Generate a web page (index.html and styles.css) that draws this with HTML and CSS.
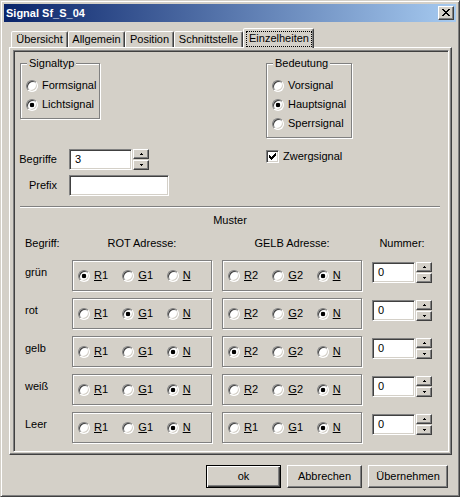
FILE: index.html
```html
<!DOCTYPE html>
<html>
<head>
<meta charset="utf-8">
<link rel="stylesheet" href="styles.css">
</head>
<body>
<div class="window">
  <div class="titlebar">
    <span class="title">Signal Sf_S_04</span>
    <div class="closebtn">
      <svg width="8" height="7" viewBox="0 0 8 7" shape-rendering="crispEdges"><path fill="#000" d="M0 0h2v1H0z M6 0h2v1H6z M1 1h2v1H1z M5 1h2v1H5z M2 2h4v1H2z M3 3h2v1H3z M2 4h4v1H2z M1 5h2v1H1z M5 5h2v1H5z M0 6h2v1H0z M6 6h2v1H6z"/></svg>
    </div>
  </div>
  <div class="client">
    <div class="tabs">
      <div class="tab t1">Übersicht</div>
      <div class="tab t2">Allgemein</div>
      <div class="tab t3">Position</div>
      <div class="tab t4">Schnittstelle</div>
      <div class="tab active"><div class="focus">Einzelheiten</div></div>
    </div>
    <div class="panel">
      <div class="page">
        <div class="top">
          <div class="col-left">
            <div class="group g-typ">
              <div class="legend">Signaltyp</div>
              <div class="opt"><span class="radio"></span>Formsignal</div>
              <div class="opt"><span class="radio on"></span>Lichtsignal</div>
            </div>
            <div class="form">
              <div class="lbl">Begriffe</div>
              <div class="field">
                <div class="edit e-begr">3</div>
                <div class="spin">
                  <div class="sbtn"><svg width="3" height="2" viewBox="0 0 3 2" shape-rendering="crispEdges"><path d="M1 0h1v1H1z M0 1h3v1H0z"/></svg></div>
                  <div class="sbtn"><svg width="3" height="2" viewBox="0 0 3 2" shape-rendering="crispEdges"><path d="M0 0h3v1H0z M1 1h1v1H1z"/></svg></div>
                </div>
              </div>
              <div class="lbl">Prefix</div>
              <div class="field"><div class="edit e-prefix"></div></div>
            </div>
          </div>
          <div class="col-right">
            <div class="group g-bed">
              <div class="legend">Bedeutung</div>
              <div class="opt"><span class="radio"></span>Vorsignal</div>
              <div class="opt"><span class="radio on"></span>Hauptsignal</div>
              <div class="opt"><span class="radio"></span>Sperrsignal</div>
            </div>
            <div class="check-row">
              <span class="checkbox"><svg width="7" height="7" viewBox="0 0 7 7" shape-rendering="crispEdges"><path d="M6 0h1v1H6z M5 1h2v1H5z M0 2h1v1H0z M4 2h3v1H4z M0 3h2v1H0z M3 3h3v1H3z M0 4h5v1H0z M1 5h3v1H1z M2 6h1v1H2z"/></svg></span>
              Zwergsignal
            </div>
          </div>
        </div>
        <div class="sep"></div>
        <div class="muster">Muster</div>
        <div class="grid">
          <div class="h h-left">Begriff:</div>
          <div class="h">ROT Adresse:</div>
          <div class="h">GELB Adresse:</div>
          <div class="h">Nummer:</div>

          <div class="rl">grün</div>
          <div class="rbox">
            <div class="ropt"><span class="radio on"></span><span><u>R</u>1</span></div>
            <div class="ropt"><span class="radio"></span><span><u>G</u>1</span></div>
            <div class="ropt"><span class="radio"></span><span><u>N</u></span></div>
          </div>
          <div class="rbox">
            <div class="ropt"><span class="radio"></span><span><u>R</u>2</span></div>
            <div class="ropt"><span class="radio"></span><span><u>G</u>2</span></div>
            <div class="ropt"><span class="radio on"></span><span><u>N</u></span></div>
          </div>
          <div class="num">
            <div class="edit e-num">0</div>
            <div class="spin">
              <div class="sbtn"><svg width="3" height="2" viewBox="0 0 3 2" shape-rendering="crispEdges"><path d="M1 0h1v1H1z M0 1h3v1H0z"/></svg></div>
              <div class="sbtn"><svg width="3" height="2" viewBox="0 0 3 2" shape-rendering="crispEdges"><path d="M0 0h3v1H0z M1 1h1v1H1z"/></svg></div>
            </div>
          </div>

          <div class="rl">rot</div>
          <div class="rbox">
            <div class="ropt"><span class="radio"></span><span><u>R</u>1</span></div>
            <div class="ropt"><span class="radio on"></span><span><u>G</u>1</span></div>
            <div class="ropt"><span class="radio"></span><span><u>N</u></span></div>
          </div>
          <div class="rbox">
            <div class="ropt"><span class="radio"></span><span><u>R</u>2</span></div>
            <div class="ropt"><span class="radio"></span><span><u>G</u>2</span></div>
            <div class="ropt"><span class="radio on"></span><span><u>N</u></span></div>
          </div>
          <div class="num">
            <div class="edit e-num">0</div>
            <div class="spin">
              <div class="sbtn"><svg width="3" height="2" viewBox="0 0 3 2" shape-rendering="crispEdges"><path d="M1 0h1v1H1z M0 1h3v1H0z"/></svg></div>
              <div class="sbtn"><svg width="3" height="2" viewBox="0 0 3 2" shape-rendering="crispEdges"><path d="M0 0h3v1H0z M1 1h1v1H1z"/></svg></div>
            </div>
          </div>

          <div class="rl">gelb</div>
          <div class="rbox">
            <div class="ropt"><span class="radio"></span><span><u>R</u>1</span></div>
            <div class="ropt"><span class="radio"></span><span><u>G</u>1</span></div>
            <div class="ropt"><span class="radio on"></span><span><u>N</u></span></div>
          </div>
          <div class="rbox">
            <div class="ropt"><span class="radio on"></span><span><u>R</u>2</span></div>
            <div class="ropt"><span class="radio"></span><span><u>G</u>2</span></div>
            <div class="ropt"><span class="radio"></span><span><u>N</u></span></div>
          </div>
          <div class="num">
            <div class="edit e-num">0</div>
            <div class="spin">
              <div class="sbtn"><svg width="3" height="2" viewBox="0 0 3 2" shape-rendering="crispEdges"><path d="M1 0h1v1H1z M0 1h3v1H0z"/></svg></div>
              <div class="sbtn"><svg width="3" height="2" viewBox="0 0 3 2" shape-rendering="crispEdges"><path d="M0 0h3v1H0z M1 1h1v1H1z"/></svg></div>
            </div>
          </div>

          <div class="rl">weiß</div>
          <div class="rbox">
            <div class="ropt"><span class="radio"></span><span><u>R</u>1</span></div>
            <div class="ropt"><span class="radio"></span><span><u>G</u>1</span></div>
            <div class="ropt"><span class="radio on"></span><span><u>N</u></span></div>
          </div>
          <div class="rbox">
            <div class="ropt"><span class="radio"></span><span><u>R</u>2</span></div>
            <div class="ropt"><span class="radio"></span><span><u>G</u>2</span></div>
            <div class="ropt"><span class="radio on"></span><span><u>N</u></span></div>
          </div>
          <div class="num">
            <div class="edit e-num">0</div>
            <div class="spin">
              <div class="sbtn"><svg width="3" height="2" viewBox="0 0 3 2" shape-rendering="crispEdges"><path d="M1 0h1v1H1z M0 1h3v1H0z"/></svg></div>
              <div class="sbtn"><svg width="3" height="2" viewBox="0 0 3 2" shape-rendering="crispEdges"><path d="M0 0h3v1H0z M1 1h1v1H1z"/></svg></div>
            </div>
          </div>

          <div class="rl">Leer</div>
          <div class="rbox">
            <div class="ropt"><span class="radio"></span><span><u>R</u>1</span></div>
            <div class="ropt"><span class="radio"></span><span><u>G</u>1</span></div>
            <div class="ropt"><span class="radio on"></span><span><u>N</u></span></div>
          </div>
          <div class="rbox">
            <div class="ropt"><span class="radio"></span><span><u>R</u>1</span></div>
            <div class="ropt"><span class="radio"></span><span><u>G</u>1</span></div>
            <div class="ropt"><span class="radio on"></span><span><u>N</u></span></div>
          </div>
          <div class="num">
            <div class="edit e-num">0</div>
            <div class="spin">
              <div class="sbtn"><svg width="3" height="2" viewBox="0 0 3 2" shape-rendering="crispEdges"><path d="M1 0h1v1H1z M0 1h3v1H0z"/></svg></div>
              <div class="sbtn"><svg width="3" height="2" viewBox="0 0 3 2" shape-rendering="crispEdges"><path d="M0 0h3v1H0z M1 1h1v1H1z"/></svg></div>
            </div>
          </div>
        </div>
      </div>
    </div>
    <div class="buttons">
      <div class="btn default">ok</div>
      <div class="btn">Abbrechen</div>
      <div class="btn wide">Übernehmen</div>
    </div>
  </div>
</div>
</body>
</html>
```

FILE: styles.css
```css
* { box-sizing: border-box; }
html, body { margin: 0; padding: 0; }
body {
  background: #d4d0c8;
  font-family: "Liberation Sans", Arial, sans-serif;
  font-size: 11px;
  line-height: 13px;
  color: #000;
}
.window {
  width: 460px;
  height: 497px;
  background: #d4d0c8;
  border: 1px solid;
  border-color: #d4d0c8 #404040 #404040 #d4d0c8;
  box-shadow: inset 1px 1px #fff, inset -1px -1px #808080;
  padding: 3px;
  display: flex;
  flex-direction: column;
}
.titlebar {
  height: 18px;
  flex: none;
  background: linear-gradient(to right, #0a246a, #a6caf0);
  display: flex;
  align-items: center;
  justify-content: space-between;
  padding: 0 2px;
}
.title { color: #fff; font-weight: bold; }
.closebtn {
  width: 16px;
  height: 14px;
  background: #d4d0c8;
  border: 1px solid;
  border-color: #fff #404040 #404040 #fff;
  box-shadow: inset -1px -1px #808080;
  display: flex;
  padding: 2px 0 0 3px;
}
.client { padding: 6px 4px 0 5px; }
.tabs {
  display: flex;
  align-items: flex-end;
  height: 19px;
  padding-left: 2px;
  position: relative;
  z-index: 1;
}
.tab {
  height: 16px;
  border: 1px solid;
  border-bottom: none;
  border-color: #fff #404040 transparent #fff;
  border-radius: 2px 2px 0 0;
  box-shadow: inset -1px 0 #808080;
  text-align: center;
  line-height: 15px;
  background: #d4d0c8;
}
.t1 { width: 57px; }
.t2 { width: 57px; }
.t3 { width: 49px; }
.t4 { width: 69px; }
.tab.active {
  width: 71px;
  height: 20px;
  margin-bottom: -1px;
  padding: 2px 1px 0 2px;
}
.focus {
  height: 16px;
  border: 1px dotted #000;
  line-height: 13px;
}
.panel {
  height: 408px;
  border: 1px solid;
  border-color: #fff #404040 #404040 #fff;
  box-shadow: inset -1px -1px #808080;
  padding: 2px 2px 2px 3px;
}
.page {
  height: 100%;
  border: 1px solid;
  border-color: #808080 #fff #fff #808080;
  box-shadow: inset 1px 1px #404040, inset -1px -1px #d4d0c8;
}
.top {
  display: flex;
  padding: 12px 0 0 6px;
}
.col-left { width: 246px; }
.group {
  position: relative;
  border: 1px solid #808080;
  box-shadow: inset 1px 1px #fff, 1px 1px #fff;
  padding: 12px 0 0 5px;
}
.g-typ { width: 80px; height: 56px; }
.g-bed { width: 86px; height: 75px; }
.legend {
  position: absolute;
  top: -7px;
  left: 6px;
  padding: 0 2px;
  background: #d4d0c8;
}
.opt {
  display: flex;
  align-items: center;
  gap: 4px;
  height: 19px;
}
.radio {
  flex: none;
  display: inline-block;
  width: 12px;
  height: 12px;
  border-radius: 50%;
  background: #fff;
  border: 1px solid;
  border-color: #808080 #fff #fff #808080;
  box-shadow: inset 1px 1px #404040, inset -1px -1px #d4d0c8;
}
.radio.on {
  background: radial-gradient(circle at center, #000 0, #000 2px, #fff 2.6px);
}
.form {
  margin: 30px 0 0 -3px;
  display: grid;
  grid-template-columns: 40px auto;
  column-gap: 12px;
  row-gap: 5px;
  align-items: center;
}
.lbl { text-align: right; white-space: nowrap; }
.field { display: flex; gap: 1px; }
.edit {
  height: 21px;
  background: #fff;
  border: 1px solid;
  border-color: #808080 #fff #fff #808080;
  box-shadow: inset 1px 1px #404040, inset -1px -1px #d4d0c8;
  padding: 0 0 0 5px;
  line-height: 19px;
}
.e-begr { width: 63px; }
.e-prefix { width: 100px; }
.e-num { width: 43px; }
.spin {
  display: flex;
  flex-direction: column;
  gap: 1px;
}
.sbtn {
  width: 16px;
  height: 10px;
  border: 1px solid;
  border-color: #fff #404040 #404040 #fff;
  box-shadow: inset -1px -1px #808080;
  display: flex;
  align-items: center;
  justify-content: center;
}
.check-row {
  margin-top: 12px;
  display: flex;
  align-items: center;
  gap: 4px;
  height: 13px;
}
.checkbox {
  flex: none;
  width: 13px;
  height: 13px;
  background: #fff;
  border: 1px solid;
  border-color: #808080 #fff #fff #808080;
  box-shadow: inset 1px 1px #404040, inset -1px -1px #d4d0c8;
  display: flex;
  padding: 2px 0 0 2px;
}
.sep {
  margin: 10px 0 0 6px;
  width: 420px;
  height: 2px;
  border-top: 1px solid #808080;
  border-bottom: 1px solid #fff;
}
.muster {
  margin: 6px 0 0 6px;
  width: 420px;
  text-align: center;
}
.grid {
  margin: 10px 0 0 11px;
  display: grid;
  grid-template-columns: 37px 140px 140px 60px;
  column-gap: 10px;
  row-gap: 7px;
}
.h {
  text-align: center;
  white-space: nowrap;
  margin-bottom: 3px;
}
.h-left { text-align: left; }
.rl { align-self: start; margin-top: 6px; }
.rbox {
  height: 31px;
  display: flex;
  align-items: center;
  padding-left: 5px;
  border: 1px solid #808080;
  box-shadow: inset 1px 1px #fff, 1px 1px #fff;
}
.ropt {
  width: 45px;
  display: flex;
  align-items: center;
  gap: 4px;
}
.num {
  align-self: start;
  margin-top: 2px;
  display: flex;
  gap: 1px;
}
.buttons {
  margin-top: 10px;
  display: flex;
  justify-content: flex-end;
  gap: 6px;
  padding-right: 4px;
}
.btn {
  width: 75px;
  height: 23px;
  border: 1px solid;
  border-color: #fff #404040 #404040 #fff;
  box-shadow: inset -1px -1px #808080;
  display: flex;
  align-items: center;
  justify-content: center;
}
.btn.default {
  border-color: #000;
  box-shadow: inset 1px 1px #fff, inset -1px -1px #404040, inset -2px -2px #808080;
}
.btn.wide { width: 80px; }
```
